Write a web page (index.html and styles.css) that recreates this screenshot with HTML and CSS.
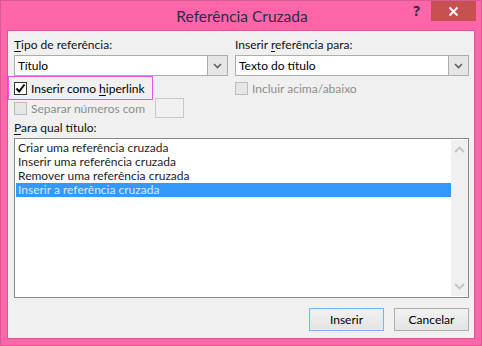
FILE: index.html
```html
<!DOCTYPE html>
<html lang="pt">
<head>
<meta charset="utf-8">
<title>Referência Cruzada</title>
<link rel="stylesheet" href="styles.css">
</head>
<body>
<div class="window">
  <div class="titlebar">
    <div class="tb-side"></div>
    <div class="title">Referência Cruzada</div>
    <div class="tb-side tb-right">
      <span class="help">?</span>
      <span class="close"><svg width="11" height="11" viewBox="0 0 11 11"><path d="M1.5 1.5 L9.5 9.5 M9.5 1.5 L1.5 9.5" stroke="#fff" stroke-width="2" fill="none"/></svg></span>
    </div>
  </div>
  <div class="panel">
    <div class="cols">
      <div class="col col-left">
        <div class="label"><u>T</u>ipo de referência:</div>
        <div class="select">
          <span class="select-text">Título</span>
          <span class="select-btn"><svg width="9" height="6" viewBox="0 0 9 6"><path d="M1 1 L4.5 4.5 L8 1" stroke="#606060" stroke-width="1.6" fill="none"/></svg></span>
        </div>
        <div class="hl-box">
          <span class="cb cb-checked"><svg width="11" height="11" viewBox="0 0 11 11"><path d="M1.5 5.5 L4.2 8.5 L9.5 1.5" stroke="#000" stroke-width="2" fill="none"/></svg></span>
          <span class="cb-label">Inserir como <u>h</u>iperlink</span>
        </div>
        <div class="row-sep">
          <span class="cb cb-disabled"></span>
          <span class="cb-label disabled">Separar números com</span>
          <span class="small-input"></span>
        </div>
      </div>
      <div class="col col-right">
        <div class="label">Inserir <u>r</u>eferência para:</div>
        <div class="select">
          <span class="select-text">Texto do título</span>
          <span class="select-btn"><svg width="9" height="6" viewBox="0 0 9 6"><path d="M1 1 L4.5 4.5 L8 1" stroke="#606060" stroke-width="1.6" fill="none"/></svg></span>
        </div>
        <div class="row-incl">
          <span class="cb cb-disabled"></span>
          <span class="cb-label disabled">Incluir acima/abaixo</span>
        </div>
      </div>
    </div>
    <div class="label label-list"><u>P</u>ara qual título:</div>
    <div class="listbox">
      <div class="items">
        <div class="item">Criar uma referência cruzada</div>
        <div class="item">Inserir uma referência cruzada</div>
        <div class="item">Remover uma referência cruzada</div>
        <div class="item selected">Inserir a referência cruzada</div>
      </div>
      <div class="scrollbar">
        <svg width="11" height="7" viewBox="0 0 11 7"><path d="M1 6 L5.5 1.5 L10 6" stroke="#c2c2c2" stroke-width="1.8" fill="none"/></svg>
        <svg width="11" height="7" viewBox="0 0 11 7"><path d="M1 1 L5.5 5.5 L10 1" stroke="#c2c2c2" stroke-width="1.8" fill="none"/></svg>
      </div>
    </div>
    <div class="buttons">
      <button class="btn btn-default">Inserir</button>
      <button class="btn">Cancelar</button>
    </div>
  </div>
</div>
</body>
</html>
```
FILE: styles.css
```css
html, body {
  margin: 0;
  padding: 0;
}
body {
  font-family: "Lato", "Noto Sans", sans-serif;
  font-size: 12px;
  line-height: 15px;
  color: #000;
}
u { text-decoration: underline; text-underline-offset: 2px; }
.window {
  width: 482px;
  height: 346px;
  box-sizing: border-box;
  background: #ff66aa;
  border: 1px solid #d75a93;
  padding: 0 6px 6px 6px;
  display: flex;
  flex-direction: column;
}
.titlebar {
  height: 29px;
  display: grid;
  grid-template-columns: 1fr auto 1fr;
  margin-right: -1px;
}
.title {
  font-size: 15.5px;
  line-height: 20px;
  color: #2b2b48;
  padding-top: 5px;
  margin-left: 1px;
}
.tb-right {
  display: flex;
  justify-content: flex-end;
  align-items: flex-start;
}
.help {
  font-family: "Noto Sans", sans-serif;
  font-weight: bold;
  font-size: 14px;
  line-height: 16px;
  color: #2b2b40;
  margin-top: 2px;
  margin-right: 11px;
}
.close {
  width: 45px;
  height: 20px;
  background: #c75050;
  display: flex;
  align-items: center;
  justify-content: center;
}
.panel {
  flex: 1;
  background: #f0f0f0;
  border: 1px solid #d75a93;
  padding: 6px 5px 7px 6px;
  display: flex;
  flex-direction: column;
}
.cols {
  display: grid;
  grid-template-columns: 214px 1fr;
  column-gap: 7px;
}
.col { display: flex; flex-direction: column; }
.label { height: 15px; white-space: nowrap; color: #111; }
.select {
  margin-top: 3px;
  height: 21px;
  box-sizing: border-box;
  border: 1px solid #acacac;
  background: #fff;
  display: flex;
  align-items: center;
}
.select-text { flex: 1; padding-left: 3px; }
.select-btn {
  width: 19px;
  height: 19px;
  background: #e6e6e6;
  border-left: 1px solid #acacac;
  display: flex;
  align-items: center;
  justify-content: center;
}
.hl-box {
  margin-left: -6px;
  width: 145px;
  height: 24px;
  box-sizing: border-box;
  border: 1px solid #ee55ee;
  margin-top: 0;
  display: flex;
  align-items: center;
  padding-left: 5px;
  white-space: nowrap;
}
.cb {
  width: 13px;
  height: 13px;
  box-sizing: border-box;
  border: 1px solid #333;
  background: #fff;
  display: inline-flex;
  align-items: center;
  justify-content: center;
  flex: none;
}
.cb-disabled { border-color: #bcbcbc; background: #e6e6e6; }
.cb-label { margin-left: 4px; white-space: nowrap; }
.disabled { color: #8d8d8d; }
.row-sep {
  display: flex;
  align-items: center;
  margin-top: -2px;
  height: 20px;
}
.small-input {
  margin-left: auto;
  margin-right: 44px;
  width: 29px;
  height: 20px;
  box-sizing: border-box;
  border: 1px solid #c8c8c8;
  background: #f0f0f0;
}
.row-incl {
  display: flex;
  align-items: center;
  margin-top: 5px;
}
.label-list { margin-top: 2px; }
.listbox {
  margin-top: 3px;
  height: 160px;
  box-sizing: border-box;
  border: 1px solid #828790;
  background: #fff;
  display: flex;
  padding: 1px 0 1px 1px;
}
.items { flex: 1; padding-top: 1px; }
.item { height: 14px; line-height: 14px; padding-left: 2px; color: #1e1e1e; white-space: nowrap; }
.item.selected { background: #3399ff; color: #d6e8fb; }
.scrollbar {
  width: 17px;
  background: #f0f0f0;
  display: flex;
  flex-direction: column;
  justify-content: space-between;
  align-items: center;
  padding: 6px 0 6px;
}
.buttons {
  margin-top: 10px;
  display: flex;
  justify-content: flex-end;
  gap: 10px;
}
.btn {
  width: 75px;
  height: 23px;
  box-sizing: border-box;
  font-family: inherit;
  font-size: 12px;
  color: #000;
  background: linear-gradient(#f2f2f2, #e3e3e3);
  border: 1px solid #adadad;
  padding: 0;
}
.btn-default { border-color: #7eb4ea; box-shadow: inset 0 0 0 1px #dcecfc; }
```
